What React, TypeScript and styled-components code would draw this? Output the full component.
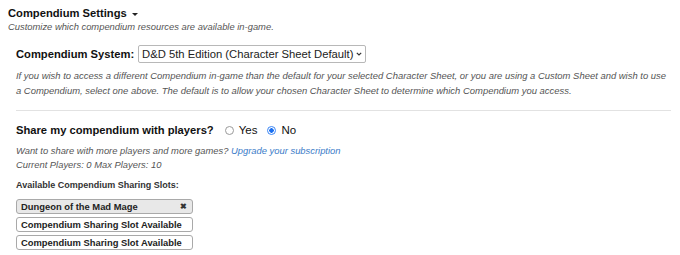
import React from "react";
import styled, { createGlobalStyle } from "styled-components";

const GlobalStyle = createGlobalStyle`
  body {
    margin: 0;
    background: #fff;
    font-family: "Liberation Sans", Arial, sans-serif;
    color: #111;
  }
`;

const Page = styled.div`
  padding: 6px 8px 0 8px;
  width: 680px;
  box-sizing: border-box;
`;

const Title = styled.div`
  font-size: 11.2px;
  font-weight: bold;
  line-height: 15px;
  display: flex;
  align-items: center;
  gap: 5px;
`;

const Caret = styled.span`
  width: 0;
  height: 0;
  border-left: 3px solid transparent;
  border-right: 3px solid transparent;
  border-top: 3.5px solid #222;
  margin-top: 1px;
`;

const Note = styled.div`
  font-size: 9.4px;
  font-style: italic;
  color: #555;
  line-height: 12px;
`;

const Section = styled.div`
  padding: 0 0 0 8px;
  width: 655px;
`;

const FieldRow = styled.div`
  display: flex;
  align-items: center;
  gap: 4px;
  font-size: 11.2px;
  font-weight: bold;
  margin: 12px 0 5px;
`;

const Select = styled.div`
  display: flex;
  align-items: center;
  height: 18px;
  box-sizing: border-box;
  border: 1px solid #b8b8b8;
  border-radius: 2px;
  padding: 0 3px 0 3px;
  font-size: 11.25px;
  font-weight: normal;
  color: #222;
  gap: 3px;
`;

const Chevron = styled.svg`
  width: 6px;
  height: 4px;
`;

const Help = styled.p`
  margin: 0;
  font-size: 9.45px;
  font-style: italic;
  color: #555;
  line-height: 15px;
`;

const SmallHelp = styled(Help)`
  font-size: 9.4px;
  line-height: 14px;
`;

const Divider = styled.hr`
  border: 0;
  border-top: 1px solid #e2e2e2;
  margin: 12px 0 0 0;
`;

const ShareRow = styled.div`
  display: flex;
  align-items: center;
  height: 16px;
  font-size: 11.2px;
  font-weight: bold;
  margin: 11px 0 6px;
`;

const Option = styled.label`
  display: flex;
  align-items: center;
  font-size: 11.5px;
  font-weight: normal;
  margin-left: 11px;
  gap: 5px;
  & + & {
    margin-left: 10px;
  }
`;

const Radio = styled.span<{ $checked?: boolean }>`
  width: 9px;
  height: 9px;
  box-sizing: border-box;
  border-radius: 50%;
  border: 1px solid ${(p) => (p.$checked ? "#3b86f5" : "#9a9a9a")};
  background: ${(p) => (p.$checked ? "radial-gradient(circle, #1a6ff0 0 2px, #fff 2.5px)" : "#fff")};
`;

const Link = styled.a`
  color: #3a7bc8;
  text-decoration: none;
`;

const SlotsTitle = styled.div`
  font-size: 9px;
  font-weight: bold;
  color: #333;
  line-height: 11px;
  margin: 8px 0 8px;
`;

const SlotList = styled.div`
  display: flex;
  flex-direction: column;
  gap: 3px;
`;

const Slot = styled.div<{ $filled?: boolean }>`
  width: 177px;
  height: 15px;
  box-sizing: border-box;
  border: 1px solid #a9a9a9;
  border-radius: 3px;
  background: ${(p) => (p.$filled ? "#e8e8e8" : "#fff")};
  font-size: 9.4px;
  font-weight: bold;
  color: #222;
  display: flex;
  align-items: center;
  justify-content: space-between;
  padding: 0 5px 0 4px;
`;

const Remove = styled.span`
  font-size: 8px;
  color: #333;
`;

export default function App() {
  return (
    <>
      <GlobalStyle />
      <Page>
        <Title>
          Compendium Settings <Caret />
        </Title>
        <Note>Customize which compendium resources are available in-game.</Note>
        <Section>
          <FieldRow>
            Compendium System:
            <Select>
              D&amp;D 5th Edition (Character Sheet Default)
              <Chevron viewBox="0 0 6 4">
                <path d="M0.8 0.8 L3 3 L5.2 0.8" fill="none" stroke="#333" strokeWidth="1.2" />
              </Chevron>
            </Select>
          </FieldRow>
          <Help>
            If you wish to access a different Compendium in-game than the default for your selected Character Sheet, or
            you are using a Custom Sheet and wish to use a Compendium, select one above. The default is to allow your
            chosen Character Sheet to determine which Compendium you access.
          </Help>
          <Divider />
          <ShareRow>
            Share my compendium with players?
            <Option>
              <Radio />
              Yes
            </Option>
            <Option>
              <Radio $checked />
              No
            </Option>
          </ShareRow>
          <SmallHelp>
            Want to share with more players and more games? <Link href="#">Upgrade your subscription</Link>
            <br />
            Current Players: 0 Max Players: 10
          </SmallHelp>
          <SlotsTitle>Available Compendium Sharing Slots:</SlotsTitle>
          <SlotList>
            <Slot $filled>
              Dungeon of the Mad Mage <Remove>✖</Remove>
            </Slot>
            <Slot>Compendium Sharing Slot Available</Slot>
            <Slot>Compendium Sharing Slot Available</Slot>
          </SlotList>
        </Section>
      </Page>
    </>
  );
}
